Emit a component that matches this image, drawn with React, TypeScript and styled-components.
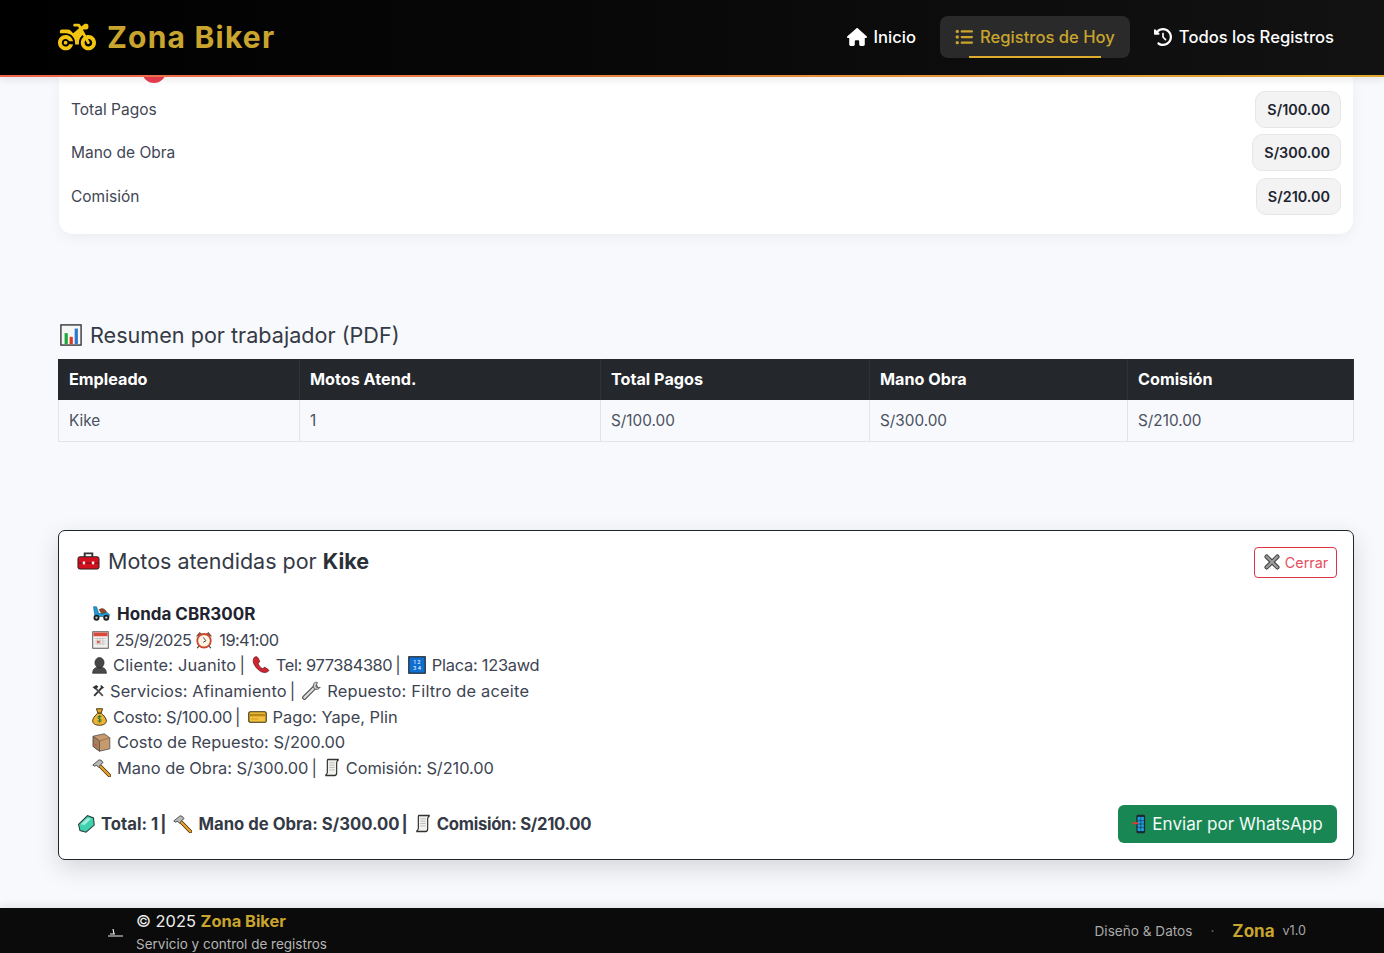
import React from "react"
import styled, { createGlobalStyle } from "styled-components"
import { FaClockRotateLeft, FaHouse, FaListUl, FaMotorcycle } from "react-icons/fa6"

const GlobalStyle = createGlobalStyle`
  html, body {
    margin: 0;
    padding: 0;
    height: 100%;
    background: #f8f9fc;
  }
  body {
    font-family: Inter, "Noto Sans", sans-serif;
    font-size: 16.4px;
    color: #343a46;
  }
`

const Page = styled.div`
  height: 100vh;
  display: flex;
  flex-direction: column;
  overflow: hidden;
`

const Header = styled.header`
  flex: none;
  height: 73px;
  box-sizing: content-box;
  display: flex;
  align-items: center;
  justify-content: space-between;
  padding: 0 35px 2px 58px;
  background: linear-gradient(90deg, #000 0%, #121212 100%);
  border-bottom: 2px solid;
  border-image: linear-gradient(90deg, #f0654d, #e0a92e) 1;
  position: relative;
  z-index: 2;
  box-shadow: 0 3px 8px rgba(0, 0, 0, 0.08);
`

const Brand = styled.div`
  display: flex;
  align-items: center;
  gap: 11px;
  font-size: 30px;
  font-weight: 700;
  color: #c9a52e;
  letter-spacing: 0.04em;
  svg {
    color: #f2c511;
    font-size: 38px;
  }
`

const Nav = styled.nav`
  display: flex;
  align-items: center;
  gap: 9px;
`

const NavItem = styled.a<{ $active?: boolean }>`
  position: relative;
  height: 42px;
  display: flex;
  align-items: center;
  gap: 7px;
  padding: 0 15px;
  border-radius: 8px;
  font-size: 16.6px;
  font-weight: 500;
  color: ${(p) => (p.$active ? "#c9a52e" : "#fff")};
  background: ${(p) => (p.$active ? "#2a2a2a" : "transparent")};
  svg {
    font-size: 18px;
    flex: none;
  }
`

const NavLine = styled.span`
  position: absolute;
  left: 29px;
  right: 29px;
  bottom: 0;
  height: 2px;
  background: #e0ac2b;
`

const Main = styled.main`
  flex: 1;
  min-height: 0;
  padding: 0 30px 0 58px;
`

const TotalsCard = styled.section`
  position: relative;
  margin: 0 1px;
  padding: 10.5px 12px 15.5px;
  background: #fff;
  border-radius: 0 0 14px 14px;
  box-shadow: 0 4px 14px rgba(0, 0, 0, 0.05);
  overflow: hidden;
`

const RedDot = styled.span`
  position: absolute;
  left: 83px;
  top: -18px;
  width: 24px;
  height: 24px;
  border-radius: 50%;
  background: #ea3e50;
`

const TotalRow = styled.div`
  height: 43.5px;
  display: flex;
  align-items: center;
  justify-content: space-between;
  font-size: 15.5px;
  color: #3f4654;
`

const Amount = styled.span`
  height: 37px;
  box-sizing: border-box;
  display: flex;
  align-items: center;
  padding: 0 10px 0 11px;
  border-radius: 10px;
  background: #f3f3f3;
  border: 1px solid #e6e6e6;
  font-weight: 600;
  font-size: 14.4px;
  color: #1d2430;
`

const SectionTitle = styled.h2`
  margin: 86px 0 9px 2px;
  height: 30px;
  display: flex;
  align-items: center;
  gap: 8px;
  font-size: 21.6px;
  font-weight: 400;
  color: #343a46;
`

const Table = styled.table`
  width: 100%;
  table-layout: fixed;
  border-collapse: separate;
  border-spacing: 0;
  font-size: 15.3px;
`

const HeadCell = styled.th<{ $w: number }>`
  width: ${(p) => p.$w}px;
  height: 41px;
  box-sizing: border-box;
  padding: 0 10px;
  text-align: left;
  font-size: 16.2px;
  font-weight: 700;
  color: #fff;
  background: #24272b;
  border-right: 1px solid #2f3338;
  &:first-child {
    padding-left: 11px;
  }
`

const BodyCell = styled.td`
  height: 42px;
  box-sizing: border-box;
  padding: 0 10px;
  color: #4a5160;
  border-right: 1px solid #e1e4e9;
  border-bottom: 1px solid #e1e4e9;
  &:first-child {
    border-left: 1px solid #e1e4e9;
  }
`

const Panel = styled.section`
  margin-top: 88px;
  height: 330px;
  box-sizing: border-box;
  padding: 16px 16px 16px 18px;
  display: flex;
  flex-direction: column;
  background: #fff;
  border: 1px solid #212529;
  border-radius: 7px;
  box-shadow: 0 8px 24px rgba(0, 0, 0, 0.14);
`

const PanelHead = styled.div`
  display: flex;
  align-items: flex-start;
  justify-content: space-between;
`

const PanelTitle = styled.h3`
  margin: 0;
  height: 29px;
  display: flex;
  align-items: center;
  gap: 8px;
  font-size: 21.5px;
  font-weight: 400;
  color: #343a46;
  b {
    font-weight: 700;
    color: #2a2f38;
  }
`

const CloseButton = styled.button`
  width: 83px;
  height: 31px;
  box-sizing: border-box;
  display: flex;
  align-items: center;
  justify-content: center;
  gap: 5px;
  padding: 0 0 0 1px;
  background: #fff;
  border: 1px solid #dc3545;
  border-radius: 4px;
  color: #e4505f;
  font: inherit;
  font-size: 14.4px;
`

const Details = styled.div`
  margin: 23.5px 0 0 15px;
`

const Line = styled.div`
  height: 25.7px;
  display: flex;
  align-items: center;
  white-space: pre;
  color: #3d4452;
  strong {
    font-size: 17px;
    font-weight: 700;
    color: #1f2430;
  }
`

// Inter runs narrower or wider than the original face depending on the
// letters, so a few runs get their own tracking to land in the same place
const Run = styled.span<{ $ls: number }>`
  letter-spacing: ${(p) => p.$ls}px;
`

const Sep = styled.span`
  margin: 0 7px 0 3px;
`

const Glyph = styled.svg.attrs({ preserveAspectRatio: "none" })<{
  $w?: number
  $h?: number
  $mr?: number
}>`
  width: ${(p) => p.$w ?? 18}px;
  height: ${(p) => p.$h ?? 18}px;
  flex: none;
  margin-right: ${(p) => p.$mr ?? 6}px;
`

const PanelFoot = styled.div`
  margin-top: auto;
  display: flex;
  align-items: center;
  justify-content: space-between;
`

const Summary = styled.div`
  display: flex;
  align-items: center;
  white-space: pre;
  font-size: 16.7px;
  font-weight: 700;
  color: #343a46;
  ${Sep} {
    margin-left: 2px;
  }
`

const WhatsAppButton = styled.button`
  height: 38px;
  width: 219px;
  box-sizing: border-box;
  display: flex;
  align-items: center;
  justify-content: center;
  padding: 0;
  background: #198754;
  border: 0;
  border-radius: 6px;
  color: #f3fbf7;
  font: inherit;
  font-size: 17.1px;
`

const Footer = styled.footer`
  flex: none;
  height: 45px;
  display: flex;
  align-items: center;
  justify-content: space-between;
  padding: 0 78px 0 108px;
  background: #0b0b0b;
  box-shadow: 0 -3px 8px rgba(0, 0, 0, 0.08);
  position: relative;
`

const FootLeft = styled.div`
  display: flex;
  align-items: center;
  gap: 13px;
  padding-top: 3px;
`

const FootStack = styled.div`
  display: flex;
  flex-direction: column;
  gap: 3px;
  color: #eee;
  font-size: 16.4px;
  line-height: 20px;
  b {
    color: #c9a52e;
    font-weight: 700;
  }
`

const FootSub = styled.span`
  font-size: 13.5px;
  line-height: 20px;
  color: #b5b5b5;
`

const FootRight = styled.div`
  display: flex;
  align-items: center;
  font-size: 13.6px;
  color: #a9a9a9;
`

const FootDot = styled.span`
  margin: 0 18px;
  color: #777;
`

const FootBrand = styled.b`
  margin-right: 8px;
  font-size: 17px;
  font-weight: 700;
  color: #c9a52e;
`

const FootVersion = styled.span`
  font-size: 12.6px;
`

const Toolbox = () => (
  <Glyph viewBox="0 3 24 19" $w={23} $h={18} $mr={0}>
    <path d="M8 8V4.500h8V8" fill="none" stroke="#333" strokeWidth="2" />
    <rect x="1" y="8" width="22" height="13" rx="2" fill="#d3101f" stroke="#222" />
    <rect x="1.500" y="14" width="21" height="1.400" fill="#8f0c16" />
    <rect x="6" y="13" width="2.500" height="3" fill="#eee" />
    <rect x="15.500" y="13" width="2.500" height="3" fill="#eee" />
  </Glyph>
)

const Scooter = () => (
  <Glyph viewBox="0 3 24 20" $h={15} $mr={7}>
    <path d="M9 8c4-4 9-2 11 4l-7 2z" fill="#8a4a28" />
    <path d="M2 4h4l3 9h7l3-2 4 3v3H4z" fill="#1e9bd7" stroke="#11577a" strokeWidth=".8" />
    <circle cx="6" cy="18.500" r="4" fill="#222" />
    <circle cx="19" cy="18.500" r="4" fill="#222" />
    <circle cx="6" cy="18.500" r="1.500" fill="#ccc" />
    <circle cx="19" cy="18.500" r="1.500" fill="#ccc" />
  </Glyph>
)

const Calendar = () => (
  <Glyph viewBox="0 0 24 24" $w={17}>
    <rect x="1" y="1" width="22" height="22" fill="#f3f1ee" stroke="#555" strokeWidth="1.300" />
    <rect x="2" y="2" width="20" height="5" fill="#d9493c" />
    <path d="M4 10h16M4 13.500h16M4 17h16M7.500 9v10M11.500 9v10M15.500 9v10" stroke="#b8b8b8" strokeWidth=".9" />
    <rect x="7" y="13" width="4" height="3" fill="#e0604f" />
  </Glyph>
)

const AlarmClock = () => (
  <Glyph viewBox="0 0 24 24">
    <path d="M2 7l4-5 3 2zM22 7l-4-5-3 2z" fill="#c7442c" stroke="#333" strokeWidth=".8" />
    <path d="M5 20l-2 3M19 20l2 3" stroke="#333" strokeWidth="1.600" />
    <circle cx="12" cy="13" r="9" fill="#fbf3e4" stroke="#c9492e" strokeWidth="2.400" />
    <path d="M11 8.500l3.500 4.500-3.500 2" fill="none" stroke="#333" strokeWidth="1.200" />
  </Glyph>
)

const Bust = () => (
  <Glyph viewBox="0 0 24 24" $w={15} $h={17}>
    <path d="M1 23c0-6 4-9 11-9s11 3 11 9z" fill="#4a4a4a" stroke="#222" />
    <circle cx="12" cy="8" r="7.300" fill="#474747" stroke="#222" />
  </Glyph>
)

const Phone = () => (
  <Glyph viewBox="0 0 24 24">
    <path
      d="M3 2c-2 3-2 7 1 11 3 5 8 9 13 9 2 0 4-1 5-2 .6-.8.2-1.600-.5-2l-4-2.600c-.8-.5-1.600-.3-2.200.5l-.9 1.100c-2.700-1-5.500-4.500-6.500-7.500l1.400-.8c.9-.5 1.100-1.300.7-2.200L8 2.500C7.400 1.300 6 .8 5 1z"
      fill="#d3232e"
      stroke="#5c1116"
    />
  </Glyph>
)

const NumberPad = () => (
  <Glyph viewBox="0 0 24 24">
    <rect x="1" y="1" width="22" height="22" fill="#0f6fd0" stroke="#222" strokeWidth="1.500" />
    <text x="12" y="10.500" fontSize="7" textAnchor="middle" fill="#fff" fontFamily="Inter, sans-serif">
      1 2
    </text>
    <text x="12" y="19" fontSize="7" textAnchor="middle" fill="#fff" fontFamily="Inter, sans-serif">
      3 4
    </text>
  </Glyph>
)

const HammerWrench = () => (
  <Glyph viewBox="0 0 24 24" $w={13} $h={13} $mr={5}>
    <path d="M4 22L20 5" stroke="#333" strokeWidth="3.500" />
    <path d="M20 22L6 7" stroke="#555" strokeWidth="3.500" />
    <path d="M1 6l7-4 4 3-6 5z" fill="#333" />
    <path d="M16 2c-1 3 1 7 5 6l2-2-3 0-1-3z" fill="#333" />
  </Glyph>
)

const Wrench = () => (
  <Glyph viewBox="0 0 24 24" $w={19} $h={19}>
    <path d="M3 21L17 7" stroke="#444" strokeWidth="5.500" strokeLinecap="round" />
    <path d="M3 21L17 7" stroke="#d8d8d8" strokeWidth="3" strokeLinecap="round" />
    <path d="M15 3c-1.500 3-.5 6 1 7 2 1 5 1 7-2l-4 .5-1.500-2L19.500 2c-2-1-3.500-.2-4.500 1z" fill="#cfcfcf" stroke="#444" />
  </Glyph>
)

const MoneyBag = () => (
  <Glyph viewBox="0 0 24 24" $w={15}>
    <path d="M7 1h10l-2.500 6h-5z" fill="#e2a52c" stroke="#3d2a08" strokeWidth="1.300" />
    <path d="M9 7h6c4 3 8 7 8 10 0 4-5 6-11 6S1 21 1 17c0-3 4-7 8-10z" fill="#eeb336" stroke="#3d2a08" strokeWidth="1.300" />
    <path d="M15 12c-1-1.500-5-1.500-5.500.4s5.500 2 5 4c-.5 2-4.500 1.800-5.500.3M12 9.500v10" fill="none" stroke="#2f7d36" strokeWidth="1.600" />
  </Glyph>
)

const CreditCard = () => (
  <Glyph viewBox="0 4 24 17" $w={19} $h={12}>
    <rect x="1" y="5" width="22" height="15" rx="2" fill="#f2c23e" stroke="#3a2c0a" strokeWidth="1.400" />
    <rect x="1.600" y="8" width="20.800" height="3.500" fill="#b88516" />
    <rect x="4" y="14.500" width="9" height="1.600" fill="#d99e21" />
  </Glyph>
)

const PackageBox = () => (
  <Glyph viewBox="0 0 24 24" $w={19} $h={19}>
    <path d="M1.500 4l14-3 7 5v14l-13 3-8-6z" fill="#c79a6e" stroke="#4d4d4d" />
    <path d="M1.500 4l8 6v13l-8-6z" fill="#a97f58" stroke="#4d4d4d" />
    <path d="M9.500 10l13-4" fill="none" stroke="#8a6a48" />
    <rect x="4" y="14" width="1.600" height="1.600" fill="#d1344a" />
  </Glyph>
)

const Hammer = () => (
  <Glyph viewBox="0 0 24 24" $w={19}>
    <path d="M9 8l13 14" stroke="#4a3008" strokeWidth="4.500" strokeLinecap="round" />
    <path d="M9 8l13 14" stroke="#eda42a" strokeWidth="2.600" strokeLinecap="round" />
    <path d="M1 8l8-7 3 1 2 3-2 1-2 3-2 2-2-2.500-3 1z" fill="#b8b8b8" stroke="#333" />
  </Glyph>
)

const Scroll = () => (
  <Glyph viewBox="0 0 24 24" $w={16} $h={19}>
    <path d="M6 2h16c-2 1-3 2-3 4v13c0 2-1 3-3 3H2c2-1 3-2 3-4V5c0-2 0-3 1-3z" fill="#f1f1ee" stroke="#333" strokeWidth="1.800" />
    <path d="M8 6h8M8 9h8M8 12h8M8 15h8" stroke="#aaa" />
  </Glyph>
)

const Gem = () => (
  <Glyph viewBox="0 0 24 24" $h={19}>
    <path d="M2 13L14 2l8 3 1 9-11 9-8-2z" fill="#3fd0ae" stroke="#2b3b38" strokeWidth="1.400" />
    <path d="M5 13l9-8 5 1-9 8z" fill="#a4ecd9" />
  </Glyph>
)

const Mobile = () => (
  <Glyph viewBox="0 0 24 24" $w={15} $h={20} $mr={5}>
    <rect x="7" y="1" width="14" height="22" rx="2" fill="#1b2730" />
    <rect x="9" y="3.500" width="10" height="17" fill="#1f9fe0" />
    <path d="M9 8h10M9 12h10M9 16h10M14 4v16" stroke="#16354a" strokeWidth=".9" />
    <path d="M1 11h9" stroke="#e23a2e" strokeWidth="2.500" />
  </Glyph>
)

const CrossMark = () => (
  <Glyph viewBox="0 0 24 24" $w={16} $h={16} $mr={0}>
    <path d="M4 4l16 16M20 4L4 20" stroke="#333" strokeWidth="6.500" strokeLinecap="round" />
    <path d="M4 4l16 16M20 4L4 20" stroke="#9a9a9a" strokeWidth="3.800" strokeLinecap="round" />
  </Glyph>
)

const BarChart = () => (
  <Glyph viewBox="0 0 24 24" $w={22} $h={22} $mr={0}>
    <rect x="1" y="1" width="22" height="22" fill="#f6f6f6" stroke="#333" strokeWidth="1.500" />
    <rect x="5" y="10" width="3.500" height="12" fill="#1fa83a" />
    <rect x="10.500" y="14" width="3.500" height="8" fill="#e03a24" />
    <rect x="16" y="5" width="3.500" height="17" fill="#2a78d0" />
  </Glyph>
)

const MiniBike = () => (
  <svg width="15" height="9" viewBox="0 0 15 9">
    <path d="M5 1l1 5M0 8h15M2 6h5" fill="none" stroke="#eee" strokeWidth="1.200" />
  </svg>
)

const columns = [
  { name: "Empleado", width: 242, value: "Kike" },
  { name: "Motos Atend.", width: 301, value: "1" },
  { name: "Total Pagos", width: 269, value: "S/100.00" },
  { name: "Mano Obra", width: 258, value: "S/300.00" },
  { name: "Comisión", width: 226, value: "S/210.00" },
]

const totals = [
  { label: "Total Pagos", value: "S/100.00" },
  { label: "Mano de Obra", value: "S/300.00" },
  { label: "Comisión", value: "S/210.00" },
]

export default function App() {
  return (
    <Page>
      <GlobalStyle />
      <Header>
        <Brand>
          <FaMotorcycle />
          Zona Biker
        </Brand>
        <Nav>
          <NavItem>
            <FaHouse size={20} />
            Inicio
          </NavItem>
          <NavItem $active>
            <FaListUl />
            Registros de Hoy
            <NavLine />
          </NavItem>
          <NavItem>
            <FaClockRotateLeft />
            Todos los Registros
          </NavItem>
        </Nav>
      </Header>
      <Main>
        <TotalsCard>
          <RedDot />
          {totals.map((t) => (
            <TotalRow key={t.label}>
              {t.label}
              <Amount>{t.value}</Amount>
            </TotalRow>
          ))}
        </TotalsCard>

        <SectionTitle>
          <BarChart />
          Resumen por trabajador (PDF)
        </SectionTitle>
        <Table>
          <thead>
            <tr>
              {columns.map((c) => (
                <HeadCell key={c.name} $w={c.width}>
                  {c.name}
                </HeadCell>
              ))}
            </tr>
          </thead>
          <tbody>
            <tr>
              {columns.map((c) => (
                <BodyCell key={c.name}>{c.value}</BodyCell>
              ))}
            </tr>
          </tbody>
        </Table>

        <Panel>
          <PanelHead>
            <PanelTitle>
              <Toolbox />
              <span>
                Motos atendidas por <b>Kike</b>
              </span>
            </PanelTitle>
            <CloseButton>
              <CrossMark />
              Cerrar
            </CloseButton>
          </PanelHead>
          <Details>
            <Line>
              <Scooter />
              <strong>Honda CBR300R</strong>
            </Line>
            <Line>
              <Calendar />
              <Run $ls={-0.65}>25/9/2025 </Run>
              <AlarmClock />
              <Run $ls={-0.6}>19:41:00</Run>
            </Line>
            <Line>
              <Bust />
              <Run $ls={0.2}>Cliente: Juanito</Run>
              <Sep>|</Sep>
              <Phone />
              <Run $ls={-0.4}>Tel: 977384380</Run>
              <Sep>|</Sep>
              <NumberPad />
              <Run $ls={-0.25}>Placa: 123awd</Run>
            </Line>
            <Line>
              <HammerWrench />
              <Run $ls={0.14}>Servicios: Afinamiento</Run>
              <Sep>|</Sep>
              <Wrench />
              <Run $ls={0.2}>Repuesto: Filtro de aceite</Run>
            </Line>
            <Line>
              <MoneyBag />
              <Run $ls={-0.27}>Costo: S/100.00</Run>
              <Sep>|</Sep>
              <CreditCard />
              Pago: Yape, Plin
            </Line>
            <Line>
              <PackageBox />
              Costo de Repuesto: S/200.00
            </Line>
            <Line>
              <Hammer />
              Mano de Obra: S/300.00<Sep>|</Sep>
              <Scroll />
              <Run $ls={-0.1}>Comisión: S/210.00</Run>
            </Line>
          </Details>
          <PanelFoot>
            <Summary>
              <Gem />
              Total: 1<Sep>|</Sep>
              <Hammer />
              Mano de Obra: S/300.00<Sep>|</Sep>
              <Scroll />
              <Run $ls={-0.3}>Comisión: S/210.00</Run>
            </Summary>
            <WhatsAppButton>
              <Mobile />
              Enviar por WhatsApp
            </WhatsAppButton>
          </PanelFoot>
        </Panel>
      </Main>
      <Footer>
        <FootLeft>
          <MiniBike />
          <FootStack>
            <span>
              © 2025 <b>Zona Biker</b>
            </span>
            <FootSub>Servicio y control de registros</FootSub>
          </FootStack>
        </FootLeft>
        <FootRight>
          Diseño &amp; Datos
          <FootDot>·</FootDot>
          <FootBrand>Zona</FootBrand>
          <FootVersion>v1.0</FootVersion>
        </FootRight>
      </Footer>
    </Page>
  )
}
